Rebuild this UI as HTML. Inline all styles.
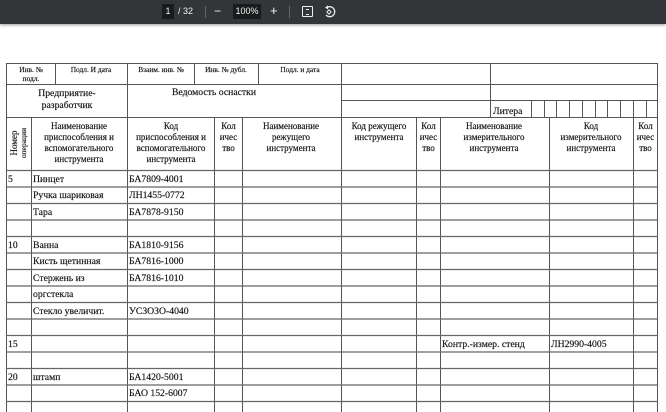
<!DOCTYPE html>
<html><head><meta charset="utf-8"><style>
body{margin:0;width:666px;height:412px;overflow:hidden;background:#fff;font-family:"Liberation Serif",serif;}
#tb{position:absolute;left:0;top:0;width:666px;height:24px;background:#323639;box-shadow:0 1px 3px rgba(0,0,0,.4);font-family:"Liberation Sans",sans-serif;color:#f1f1f1;font-size:9px;}
#tb div{position:absolute;}
</style></head><body>
<div id="tb">
<div style="left:162px;top:4px;width:12px;height:15px;background:#191b1c;text-align:center;line-height:15px">1</div>
<div style="left:178px;top:4px;line-height:15px">/ 32</div>
<div style="left:205px;top:6px;width:1px;height:12px;background:#666"></div>
<div style="left:214px;top:4px;line-height:15px;font-size:12px">−</div>
<div style="left:233px;top:4px;width:28px;height:15px;background:#191b1c;text-align:center;line-height:15px">100%</div>
<div style="left:270px;top:3px;line-height:15px;font-size:13px">+</div>
<div style="left:289px;top:6px;width:1px;height:12px;background:#666"></div>
<div style="left:302px;top:6px;width:9px;height:9px;border:1.3px solid #eee;border-radius:1px"></div>
<div style="left:306px;top:9px;width:3px;height:4px;border-top:1px solid #eee;border-bottom:1px solid #eee"></div>
<svg style="position:absolute;left:323px;top:4px" width="14" height="15" viewBox="0 0 14 15"><path d="M4 3.5 A5 5 0 1 1 3 11" fill="none" stroke="#eee" stroke-width="1.3"/><path d="M2 3.5 L5 1.5 L5 5.5 Z" fill="#eee"/><rect x="4.5" y="6.5" width="3" height="3" fill="none" stroke="#eee" transform="rotate(45 6 8)"/></svg>
</div>
<svg style="position:absolute;left:0;top:0" width="666" height="412" font-family="Liberation Serif, serif" fill="#111">
<g stroke="#555" stroke-width="1" fill="none">
<rect x="6.5" y="63.5" width="651" height="360"/>
<line x1="6" y1="84.5" x2="658" y2="84.5"/>
<line x1="341" y1="100.5" x2="658" y2="100.5"/>
<line x1="6" y1="117.5" x2="658" y2="117.5"/>
<line x1="55.5" y1="63" x2="55.5" y2="84"/>
<line x1="194.5" y1="63" x2="194.5" y2="84"/>
<line x1="258.5" y1="63" x2="258.5" y2="84"/>
<line x1="127.5" y1="63" x2="127.5" y2="412"/>
<line x1="341.5" y1="63" x2="341.5" y2="412"/>
<line x1="490.5" y1="63" x2="490.5" y2="117"/>
<line x1="531.5" y1="100" x2="531.5" y2="117"/>
<line x1="544.5" y1="100" x2="544.5" y2="117"/>
<line x1="556.5" y1="100" x2="556.5" y2="117"/>
<line x1="569.5" y1="100" x2="569.5" y2="117"/>
<line x1="582.5" y1="100" x2="582.5" y2="117"/>
<line x1="595.5" y1="100" x2="595.5" y2="117"/>
<line x1="607.5" y1="100" x2="607.5" y2="117"/>
<line x1="620.5" y1="100" x2="620.5" y2="117"/>
<line x1="633.5" y1="100" x2="633.5" y2="117"/>
<line x1="646.5" y1="100" x2="646.5" y2="117"/>
<line x1="31.5" y1="117" x2="31.5" y2="412"/>
<line x1="214.5" y1="117" x2="214.5" y2="412"/>
<line x1="242.5" y1="117" x2="242.5" y2="412"/>
<line x1="416.5" y1="117" x2="416.5" y2="412"/>
<line x1="440.5" y1="117" x2="440.5" y2="412"/>
<line x1="549.5" y1="117" x2="549.5" y2="412"/>
<line x1="633.5" y1="117" x2="633.5" y2="412"/>
<g stroke="#666" stroke-width="1.3">
<line x1="6" y1="170.5" x2="658" y2="170.5"/>
<line x1="6" y1="187" x2="658" y2="187"/>
<line x1="6" y1="203.5" x2="658" y2="203.5"/>
<line x1="6" y1="220" x2="658" y2="220"/>
<line x1="6" y1="236.5" x2="658" y2="236.5"/>
<line x1="6" y1="253" x2="658" y2="253"/>
<line x1="6" y1="269.5" x2="658" y2="269.5"/>
<line x1="6" y1="286" x2="658" y2="286"/>
<line x1="6" y1="302.5" x2="658" y2="302.5"/>
<line x1="6" y1="319" x2="658" y2="319"/>
<line x1="6" y1="335.5" x2="658" y2="335.5"/>
<line x1="6" y1="352" x2="658" y2="352"/>
<line x1="6" y1="368.5" x2="658" y2="368.5"/>
<line x1="6" y1="385" x2="658" y2="385"/>
<line x1="6" y1="401.5" x2="658" y2="401.5"/>
</g></g>
<g stroke="#111" stroke-width="0.15">
<g font-size="7.4" text-anchor="middle">
<text x="31" y="72">Инв. №</text><text x="31" y="81">подл.</text>
<text x="91" y="72">Подл. И дата</text>
<text x="161" y="72">Взаим. инв. №</text>
<text x="226" y="72">Инв. № дубл.</text>
<text x="300" y="72">Подл. и дата</text>
</g>
<g font-size="9.7" text-anchor="middle">
<text x="67" y="96">Предприятие-</text><text x="67" y="108">разработчик</text>
<text x="214" y="95">Ведомость оснастки</text>
</g>
<text x="493" y="114" font-size="9.7">Литера</text>
<g font-size="9" text-anchor="middle">
<text transform="translate(17,143) rotate(-90)">Номер</text>
<text transform="translate(26,143) rotate(-90)" font-size="7.5">операции</text>
<text x="79" y="129">Наименование</text><text x="79" y="140">приспособления и</text><text x="79" y="151">вспомогательного</text><text x="79" y="162">инструмента</text>
<text x="171" y="129">Код</text><text x="171" y="140">приспособления и</text><text x="171" y="151">вспомогательного</text><text x="171" y="162">инструмента</text>
<text x="228.5" y="129">Кол</text><text x="228.5" y="140">ичес</text><text x="228.5" y="151">тво</text>
<text x="291" y="129">Наименование</text><text x="291" y="140">режущего</text><text x="291" y="151">инструмента</text>
<text x="379" y="129">Код режущего</text><text x="379" y="140">инструмента</text>
<text x="428.5" y="129">Кол</text><text x="428.5" y="140">ичес</text><text x="428.5" y="151">тво</text>
<text x="494" y="129">Наименование</text><text x="494" y="140">измерительного</text><text x="494" y="151">инструмента</text>
<text x="591" y="129">Код</text><text x="591" y="140">измерительного</text><text x="591" y="151">инструмента</text>
<text x="645.5" y="129">Кол</text><text x="645.5" y="140">ичес</text><text x="645.5" y="151">тво</text>
</g>
<g font-size="9.7">
<text x="8" y="182">5</text><text x="33" y="182">Пинцет</text><text x="129" y="182">БА7809-4001</text>
<text x="33" y="198">Ручка шариковая</text><text x="129" y="198">ЛН1455-0772</text>
<text x="33" y="215">Тара</text><text x="129" y="215">БА7878-9150</text>
<text x="8" y="248">10</text><text x="33" y="248">Ванна</text><text x="129" y="248">БА1810-9156</text>
<text x="33" y="264">Кисть щетинная</text><text x="129" y="264">БА7816-1000</text>
<text x="33" y="281">Стержень из</text><text x="129" y="281">БА7816-1010</text>
<text x="33" y="297">оргстекла</text>
<text x="33" y="314">Стекло увеличит.</text><text x="129" y="314">УСЗОЗО-4040</text>
<text x="8" y="347">15</text><text x="442" y="347">Контр.-измер. стенд</text><text x="551" y="347">ЛН2990-4005</text>
<text x="8" y="380">20</text><text x="33" y="380">штамп</text><text x="129" y="380">БА1420-5001</text>
<text x="129" y="396">БАО 152-6007</text>
</g>
</g>
</svg>
</body></html>
